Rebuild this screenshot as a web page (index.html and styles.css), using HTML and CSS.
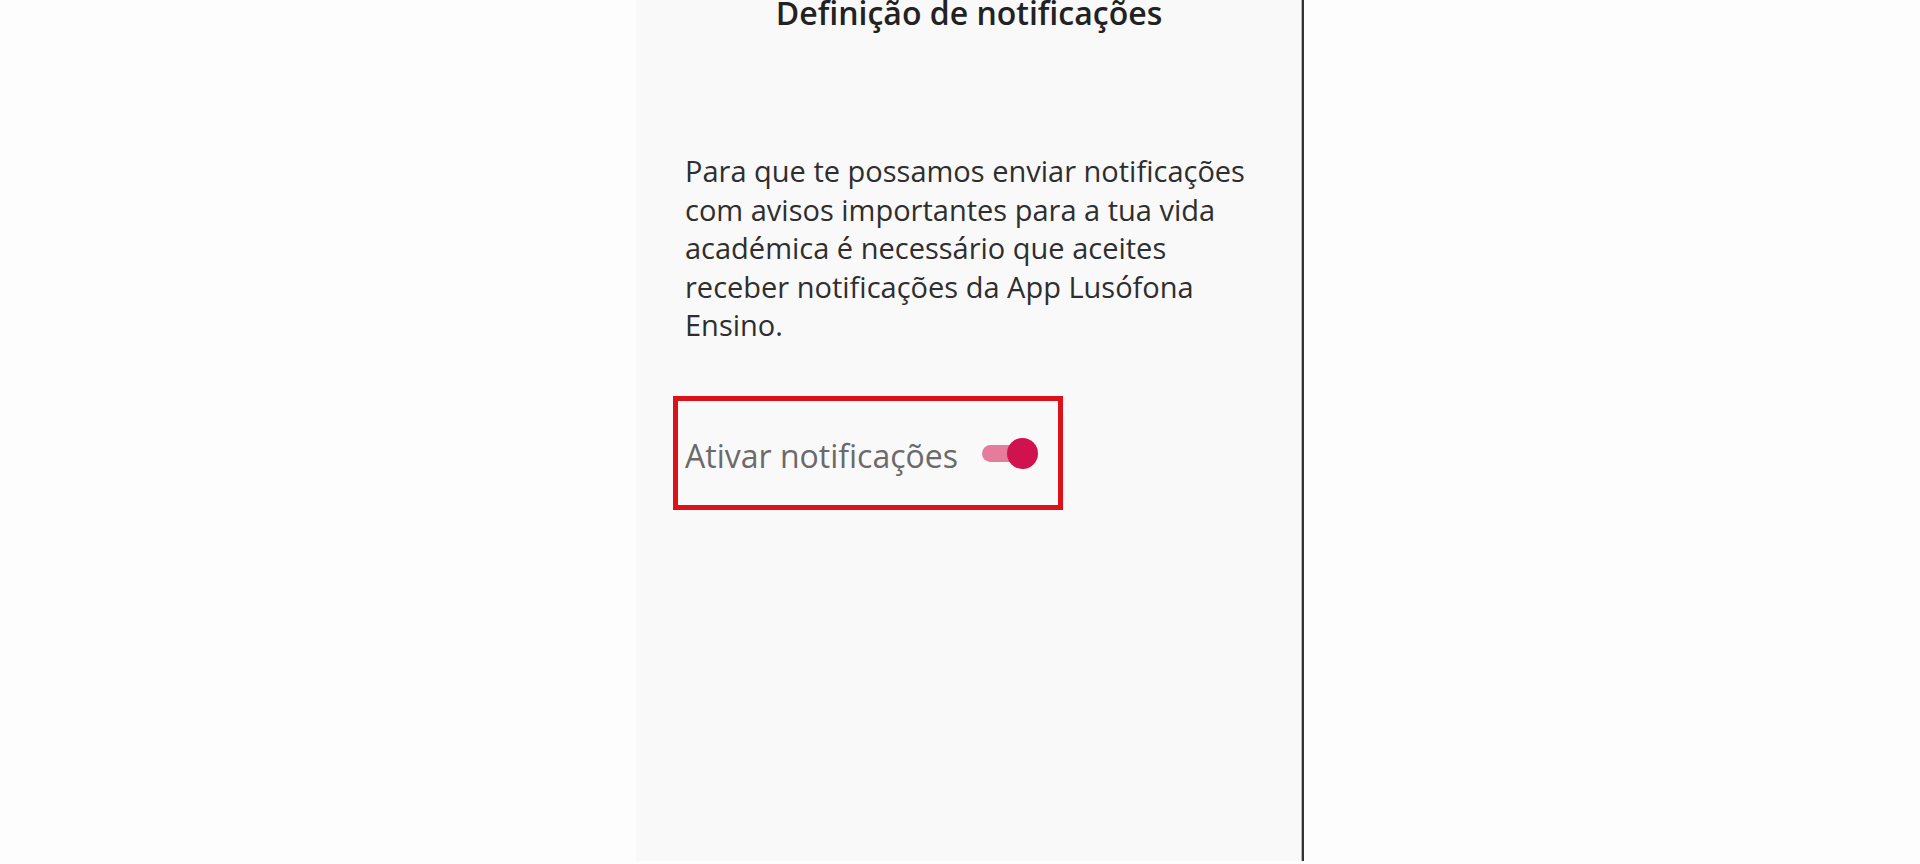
FILE: index.html
```html
<!DOCTYPE html>
<html lang="pt-PT">
<head>
    <meta charset="UTF-8">
    <meta name="viewport" content="width=device-width, initial-scale=1.0">
    <title>Definição de notificações</title>
    <link rel="stylesheet" href="styles.css">
</head>
<body>
    <div class="ecra">
        <h1 class="titulo">Definição de notificações</h1>
        <p class="texto">Para que te possamos enviar notificações com avisos importantes para a tua vida académica é necessário que aceites receber notificações da App Lusófona Ensino.</p>
        <div class="destaque">
            <span class="rotulo">Ativar notificações</span>
            <span class="interruptor" role="switch" aria-checked="true"></span>
        </div>
    </div>
</body>
</html>
```

FILE: styles.css
```css
html, body {
    margin: 0;
    height: 100%;
}
body {
    background-color: #fdfdfd;
    font-family: "Open Sans", "Noto Sans", sans-serif;
    overflow: hidden;
}
.ecra {
    box-sizing: border-box;
    margin-left: 636px;
    width: 668px;
    height: 864px;
    background: #f9f9f9;
    border-right: 2px solid #333;
    box-shadow: inset -1px 0 0 #b5b5b5;
    padding: 0 57px 0 49px;
}
.titulo {
    margin: -3px -57px 0 -49px;
    font-size: 32px;
    line-height: 31px;
    font-weight: 600;
    color: #222;
    text-align: center;
}
.texto {
    margin: 124px 0 0 0;
    font-size: 29px;
    line-height: 38.5px;
    color: #2e2e2e;
}
.destaque {
    display: inline-flex;
    align-items: center;
    gap: 24px;
    margin: 51px 0 0 -12px;
    padding: 33px 20px 28px 7px;
    border: 5px solid #dc1218;
}
.rotulo {
    font-size: 32px;
    color: #6a6a6a;
}
.interruptor {
    position: relative;
    width: 56px;
    height: 31px;
    margin-bottom: 4px;
}
.interruptor::before {
    content: "";
    position: absolute;
    left: 0;
    top: 7px;
    width: 48px;
    height: 17px;
    border-radius: 9px;
    background: #e67c9c;
}
.interruptor::after {
    content: "";
    position: absolute;
    right: 0;
    top: 0;
    width: 31px;
    height: 31px;
    border-radius: 50%;
    background: #d0124e;
}
```
